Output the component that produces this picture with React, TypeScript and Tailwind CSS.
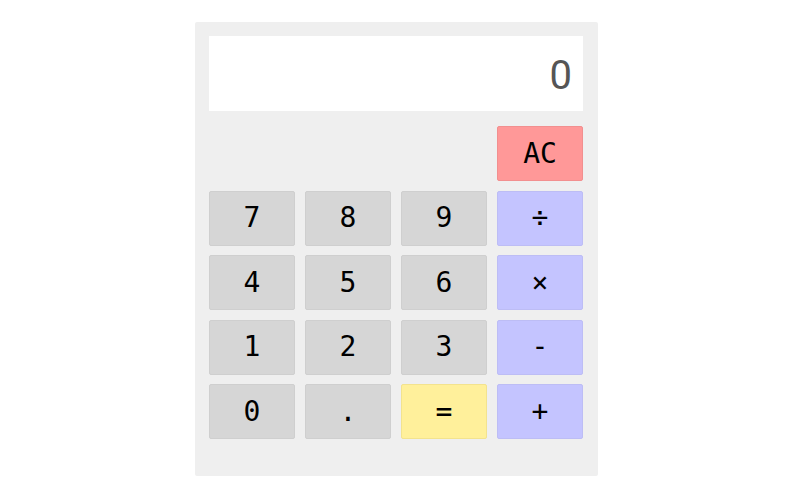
import React from 'react';

type Key = { label: string; kind: 'num' | 'op' | 'eq' | 'clear' };

const rows: Key[][] = [
  [
    { label: '7', kind: 'num' },
    { label: '8', kind: 'num' },
    { label: '9', kind: 'num' },
    { label: '÷', kind: 'op' },
  ],
  [
    { label: '4', kind: 'num' },
    { label: '5', kind: 'num' },
    { label: '6', kind: 'num' },
    { label: '×', kind: 'op' },
  ],
  [
    { label: '1', kind: 'num' },
    { label: '2', kind: 'num' },
    { label: '3', kind: 'num' },
    { label: '-', kind: 'op' },
  ],
  [
    { label: '0', kind: 'num' },
    { label: '.', kind: 'num' },
    { label: '=', kind: 'eq' },
    { label: '+', kind: 'op' },
  ],
];

const kindClass = {
  num: 'bg-[#d6d6d6] border-[#cfcfcf]',
  op: 'bg-[#c4c4ff] border-[#bdbdf5]',
  eq: 'bg-[#fff09b] border-[#f3e38e]',
  clear: 'bg-[#ff9898] border-[#f28f8f]',
};

const CalcButton = ({ k }: { k: Key }) => (
  <button
    className={`w-full h-[55px] rounded-[2px] border text-[28px] leading-none text-black font-['DejaVu_Sans_Mono',monospace] ${kindClass[k.kind]}`}
  >
    {k.label}
  </button>
);

const App = () => {
  const [display] = React.useState('0');

  return (
    <div className="w-[791px] h-[499px] bg-white flex justify-center pl-[2px] pt-[22px]">
      <div className="w-[403px] h-[454px] bg-[#efefef] rounded-[2px] pl-[14px] pr-[15px] pt-[14px]">
        <div className="h-[75px] bg-white flex items-center justify-end pt-[5px] pr-[11px] text-[40px] text-[#555] font-['Roboto',sans-serif]">
          {display}
        </div>
        <div className="mt-[15px] grid grid-cols-4 gap-x-[10px] gap-y-[9.5px]">
          <div className="col-start-4">
            <CalcButton k={{ label: 'AC', kind: 'clear' }} />
          </div>
          {rows.flat().map((k, i) => (
            <CalcButton key={i} k={k} />
          ))}
        </div>
      </div>
    </div>
  );
};

export default App;
